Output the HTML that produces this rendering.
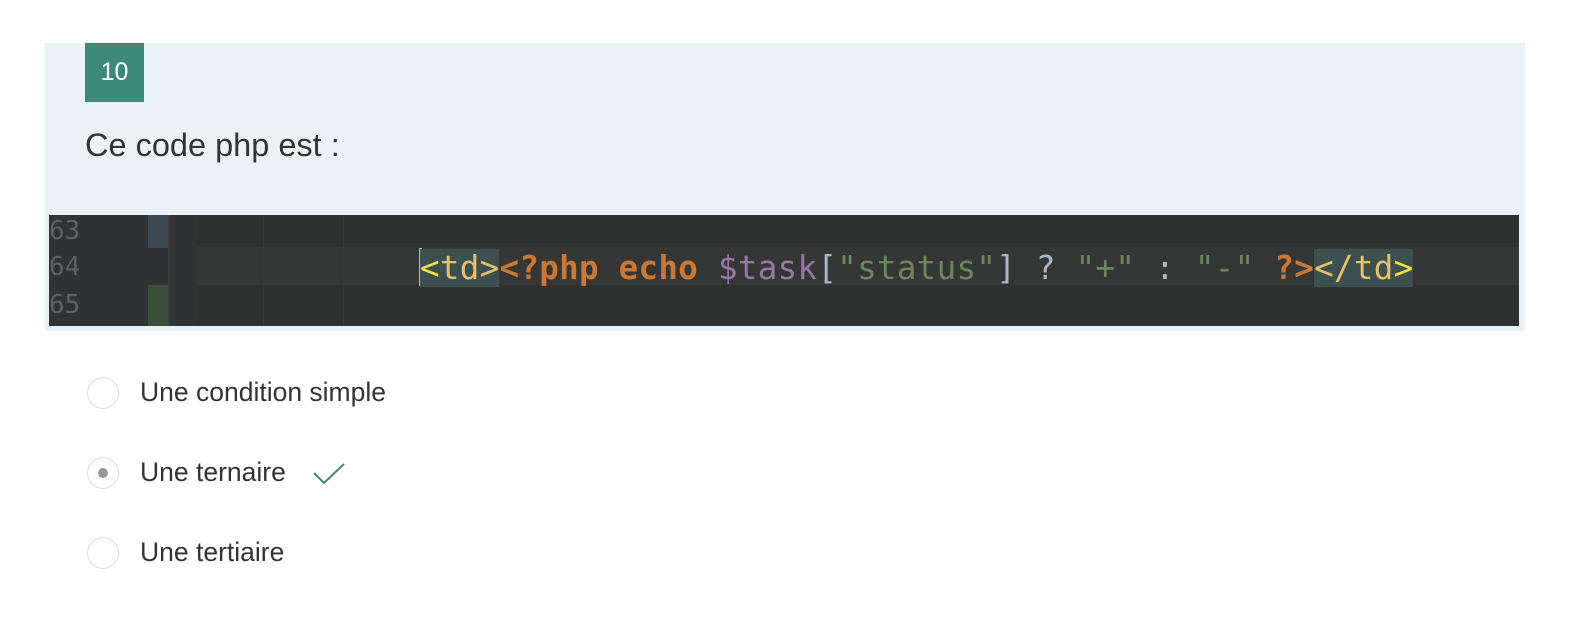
<!DOCTYPE html>
<html><head><meta charset="utf-8"><style>
body{margin:0;background:#fff;width:1590px;height:644px;position:relative;font-family:"Liberation Sans",sans-serif;overflow:hidden}
.panel{position:absolute;left:45px;top:43px;width:1480px;height:288px;background:#eaf2f5}
.badge{position:absolute;left:85px;top:43px;width:59px;height:59px;background:#3d8a78;color:#fff;font-size:25px;line-height:59px;text-align:center}
.q{position:absolute;left:85px;top:127px;font-size:32.5px;color:#333}
.code{position:absolute;left:49px;top:215px;width:1470px;height:111px;background:#2f3030;overflow:hidden}
.ln{position:absolute;left:0;width:100px;font-family:"DejaVu Sans Mono",monospace;font-size:26px;color:#5d6263}
.cur{position:absolute;left:0;top:32px;width:1470px;height:38px;background:#353737}
.gut{position:absolute;left:0;top:0;width:100px;height:111px;background:#313335}
.src{position:absolute;left:371px;top:34px;font-family:"DejaVu Sans Mono",monospace;font-size:32.5px;letter-spacing:0.3px;white-space:pre;color:#a9b7c6;line-height:38px}
.y{color:#e8bf6a}.o{color:#cc7832;font-weight:bold}.p{color:#9876aa}.g{color:#6a8759}.hl{background:#3c5050}
.r{position:absolute;left:87px;width:30px;height:30px;border:1px solid #ddd;border-radius:50%;background:#fff;box-shadow:inset 0 1px 2px rgba(0,0,0,.05)}
.t{position:absolute;left:140px;font-size:26.5px;color:#333}
</style></head><body>
<div class="panel"></div>
<div class="badge">10</div>
<div class="q">Ce code php est :</div>
<div class="code">
<div class="cur"></div>
<div class="gut" style="background:#303233;width:148px"></div>
<div style="position:absolute;left:99px;top:0;width:20px;height:33px;background:#3b4a55"></div>
<div style="position:absolute;left:99px;top:70px;width:20px;height:41px;background:#3b5038"></div>
<div style="position:absolute;left:119px;top:0;width:2px;height:111px;background:#3c3f41"></div>
<div style="position:absolute;left:214px;top:0;width:1px;height:111px;background:#373a3a"></div>
<div style="position:absolute;left:294px;top:0;width:1px;height:111px;background:#373a3a"></div>
<div class="ln" style="top:1px">63</div>
<div class="ln" style="top:37px">64</div>
<div class="ln" style="top:75px">65</div>
<div style="position:absolute;left:370px;top:33px;width:3px;height:38px;background:#bbb"></div>
<div class="src"><span class="hl"><span style="color:#f0e040">&lt;</span><span class="y">td&gt;</span></span><span class="o">&lt;?php echo </span><span class="p">$task</span>[<span class="g">"status"</span>] ? <span class="g">"+"</span> : <span class="g">"-"</span> <span class="o">?&gt;</span><span class="hl"><span class="y">&lt;/td</span><span style="color:#f0e040">&gt;</span></span></div>
</div>
<div class="r" style="top:377px"></div>
<div class="t" style="top:377px">Une condition simple</div>
<div class="r" style="top:457px"><div style="position:absolute;left:10px;top:10px;width:10px;height:10px;border-radius:50%;background:#999"></div></div>
<div class="t" style="top:457px">Une ternaire</div>
<svg style="position:absolute;left:312px;top:461px" width="34" height="26" viewBox="0 0 34 26"><path d="M2 12 L12 22 L32 3" fill="none" stroke="#3d8a78" stroke-width="2"/></svg>
<div class="r" style="top:537px"></div>
<div class="t" style="top:537px">Une tertiaire</div>
</body></html>
